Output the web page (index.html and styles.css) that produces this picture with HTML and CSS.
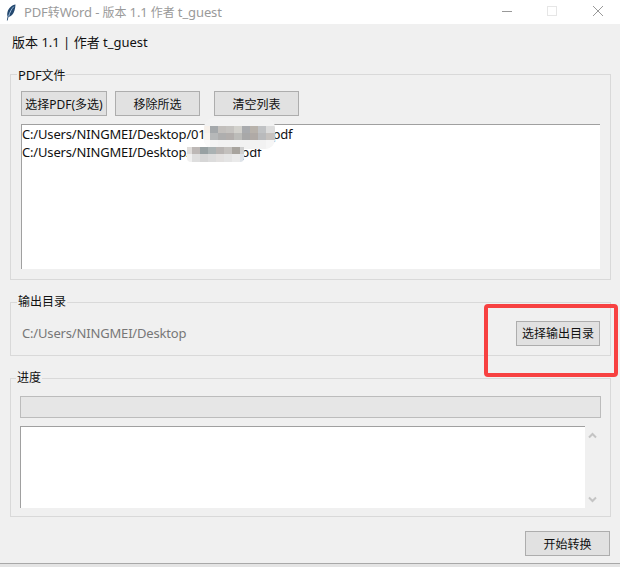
FILE: index.html
```html
<!DOCTYPE html>
<html lang="zh-CN">
<head>
<meta charset="utf-8">
<title>PDF转Word</title>
<link rel="stylesheet" href="styles.css">
</head>
<body>
<div class="window">
  <header class="titlebar">
    <svg class="feather" width="10" height="17" viewBox="0 0 10 17"><path d="M9.5 .5C6 1 2.5 4 1.5 8 1 10 1.2 11.5 1.6 12.5L.8 16.5 1.6 16.6 2.5 13C5 12.5 7.5 10 8.5 6.5 9 4.5 9.5 2.5 9.5 .5Z" fill="#24486f"/><path d="M7.8 2.6C5.6 4.8 3.8 8.2 2.6 12.4" stroke="#a9c8e6" stroke-width=".9" fill="none"/></svg>
    <span class="title-text">PDF<span class="zh">转</span>Word - <span class="zh">版本</span> 1.1 <span class="zh">作者</span> t_guest</span>
    <div class="win-controls">
      <svg class="win-btn" width="46" height="24" viewBox="0 0 46 24"><path d="M19 11.5H29" stroke="#999" stroke-width="1"/></svg>
      <svg class="win-btn" width="46" height="24" viewBox="0 0 46 24"><rect x="18.5" y="6.5" width="9" height="9" fill="none" stroke="#e6e6e6"/></svg>
      <svg class="win-btn" width="46" height="24" viewBox="0 0 46 24"><path d="M18 6L28 16M28 6L18 16" stroke="#999" stroke-width="1" fill="none"/></svg>
    </div>
  </header>
  <main class="content">
    <div class="version">版本 1.1 | 作者 t_guest</div>
    <section class="group group-files">
      <div class="legend">PDF<span class="zh">文件</span></div>
      <div class="toolbar">
        <button class="btn btn-pick">选择PDF(多选)</button>
        <button class="btn btn-remove">移除所选</button>
        <button class="btn btn-clear">清空列表</button>
      </div>
      <div class="listbox">
        <div class="list-item">C:/Users/NINGMEI/Desktop/01xxxxxxxxxi.pdf</div>
        <div class="list-item">C:/Users/NINGMEI/Desktop/xxxxxxx.pdf</div>
      </div>
    </section>
    <section class="group group-output">
      <div class="legend">输出目录</div>
      <div class="output-row">
        <span class="path">C:/Users/NINGMEI/Desktop</span>
        <button class="btn btn-output">选择输出目录</button>
      </div>
    </section>
    <section class="group group-progress">
      <div class="legend">进度</div>
      <div class="progress"></div>
      <div class="log-row">
        <div class="log"></div>
        <div class="scrollbar">
          <svg width="9" height="7" viewBox="0 0 9 7"><path d="M1 5.5L4.5 2 8 5.5" fill="none" stroke="#c4c4c4" stroke-width="2"/></svg>
          <svg width="9" height="7" viewBox="0 0 9 7"><path d="M1 1.5L4.5 5 8 1.5" fill="none" stroke="#c4c4c4" stroke-width="2"/></svg>
        </div>
      </div>
    </section>
    <div class="footer"><button class="btn btn-start">开始转换</button></div>
  </main>
  <div class="mosaic mosaic-a">
    <div class="m-row m-a1"></div><div class="m-row m-a2"></div><div class="m-row m-a3"></div><div class="m-row m-a4"></div>
  </div>
  <div class="mosaic mosaic-b">
    <div class="m-row m-b1"></div><div class="m-row m-b2"></div>
  </div>
  <div class="annotation"></div>
</div>
</body>
</html>
```

FILE: styles.css
```css
* { box-sizing: border-box; }
html, body { margin: 0; padding: 0; background: #fff; }
body {
  font-family: "Noto Sans", "Noto Sans CJK SC", sans-serif;
  font-size: 13px;
  color: #111;
}
.zh { font-size: 12px; }
.window {
  position: relative;
  width: 620px;
  height: 567px;
  overflow: hidden;
  display: flex;
  flex-direction: column;
  background: #e4e4e4;
  padding-bottom: 3px;
}
.titlebar {
  height: 24px;
  flex: none;
  background: #fff;
  display: flex;
  align-items: center;
  padding-left: 6px;
}
.feather { flex: none; margin-right: 8px; }
.title-text { color: #9a9a9a; font-size: 13px; white-space: nowrap; line-height: 20px; letter-spacing: -.12px; }
.win-controls { margin-left: auto; display: flex; margin-right: -1px; }
.win-btn { display: block; }
.content {
  flex: 1;
  padding: 8px 9px 0 10px;
  background: #f0f0f0;
  border-bottom: 1px solid #a8a8a8;
  display: flex;
  flex-direction: column;
}
.version { height: 20px; line-height: 20px; padding-left: 2px; margin-bottom: 22px; }
.group { border: 1px solid #d9d9d9; padding: 0 10px; }
.legend {
  width: fit-content;
  height: 16px;
  line-height: 16px;
  margin: -8px 0 0 -4px;
  padding: 0 1px;
  background: #f0f0f0;
  font-size: 13px;
  letter-spacing: -.17px;
}
.group-output .legend, .group-progress .legend { font-size: 12px; letter-spacing: 0; height: 17px; margin: -9px 0 0 -4px; }
.btn {
  font: inherit;
  font-size: 12px;
  color: #111;
  background: #e1e1e1;
  border: 1px solid #adadad;
  padding: 0;
  height: 25px;
  white-space: nowrap;
}
.group-files { height: 206px; margin-bottom: 22px; }
.toolbar { display: flex; margin-top: 8px; height: 25px; }
.btn-pick { width: 86px; margin-right: 8px; }
.btn-remove { width: 85px; margin-right: 14px; }
.btn-clear { width: 85px; }
.listbox {
  margin-top: 8px;
  width: 579px;
  height: 145px;
  background: #fff;
  border-top: 1px solid #a0a0a0;
  border-left: 1px solid #a0a0a0;
}
.list-item { height: 18px; line-height: 18px; white-space: nowrap; letter-spacing: -.17px; }
.group-output { height: 54px; margin-bottom: 22px; }
.output-row { display: flex; align-items: center; justify-content: space-between; height: 38px; margin-top: 3px; padding-left: 1px; }
.path { color: #777; letter-spacing: -.17px; }
.btn-output { width: 84px; }
.group-progress { height: 139px; padding: 0 9px; }
.progress {
  margin-top: 9px;
  height: 22px;
  width: 581px;
  background: #e6e6e6;
  border: 1px solid #bcbcbc;
}
.log-row { display: flex; margin-top: 8px; }
.log {
  width: 565px;
  height: 82px;
  background: #fff;
  border-top: 1px solid #a0a0a0;
  border-left: 1px solid #a0a0a0;
}
.scrollbar {
  width: 16px;
  padding: 6px 0 5px 3px;
  display: flex;
  flex-direction: column;
  justify-content: space-between;
  height: 82px;
}
.scrollbar svg { display: block; }
.footer { display: flex; justify-content: flex-end; margin-top: 14px; padding-right: 1px; }
.btn-start { width: 85px; }
.mosaic { position: absolute; display: flex; flex-direction: column; overflow: hidden; }
.mosaic-a { left: 204px; top: 118px; width: 71px; height: 31px; border-radius: 10px; background: #f3f3f3; }
.mosaic-b { left: 187px; top: 147px; width: 57px; height: 15px; border-radius: 0 0 4px 4px; }
.m-row { flex: 1; }
.m-a1 { flex: 0 0 8px; background: #f2f2f2; }
.m-a2 { flex: 0 0 7px; background: linear-gradient(90deg, #f6f0ea 0 6px, #a4a8ab 6px 14px, #c2bfbc 14px 22px, #c5c3c0 22px 30px, #d2d1cc 30px 38px, #a9abae 38px 46px, #b8b2ab 46px 54px, #c0c2c4 54px 62px, #dcdcdc 62px 73px); }
.m-a3 { flex: 0 0 7px; background: linear-gradient(90deg, #f8f4ef 0 6px, #b6b8b9 6px 14px, #aeaeae 14px 22px, #b2aeac 22px 30px, #bcbcb9 30px 38px, #a8a8a8 38px 46px, #b0aaa6 46px 54px, #b9babc 54px 62px, #c6c2bf 62px 73px); }
.m-a4 { flex: 1; background: linear-gradient(90deg, #fbfbfb 0 6px, #f4f4f4 6px 14px, #f2f2f2 14px 62px, #f6f6f6 62px 73px); }
.m-b1 { flex: 0 0 7px; background: linear-gradient(90deg, #dfdcda 0 5px, #bdb8b6 5px 13px, #98a1a3 13px 21px, #aab2b3 21px 29px, #b8b4b2 29px 37px, #c3c0bd 37px 45px, #a8a49e 45px 53px, #cfcfcf 53px 57px); }
.m-b2 { flex: 1; background: linear-gradient(90deg, #f0f0f0 0 5px, #dedede 5px 13px, #d6d6d6 13px 21px, #dcdcdc 21px 29px, #e2e0df 29px 37px, #e4e4e4 37px 45px, #eaeaea 45px 53px, #dde2e8 53px 57px); }
.annotation {
  position: absolute;
  left: 484px;
  top: 304px;
  width: 134px;
  height: 73px;
  border: 4px solid #f74141;
  border-radius: 4px;
}
```
